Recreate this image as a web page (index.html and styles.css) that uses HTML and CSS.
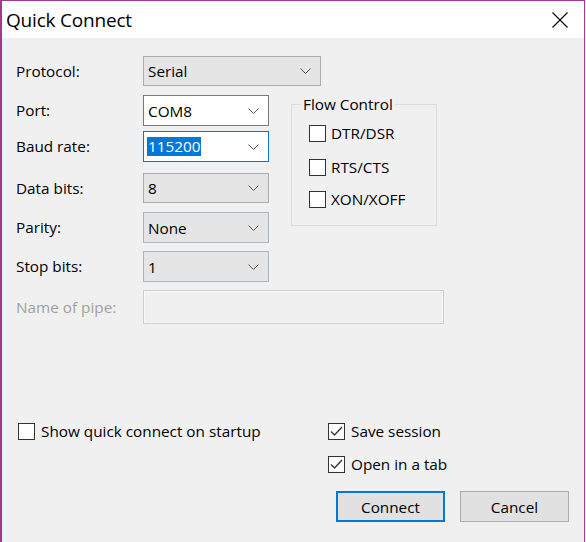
FILE: index.html
```html
<!DOCTYPE html>
<html>
<head>
<meta charset="utf-8">
<link rel="stylesheet" href="styles.css">
</head>
<body>
<div class="window">
  <div class="titlebar">
    <span class="title">Quick Connect</span>
    <svg class="close" width="16" height="16" viewBox="0 0 16 16"><path d="M0.5 0.5 L15.5 15.5 M15.5 0.5 L0.5 15.5" stroke="#000" stroke-width="1.1" fill="none"/></svg>
  </div>
  <div class="content">
    <div class="top">
      <div class="rows">
        <div class="row r-protocol">
          <span class="label">Protocol:</span>
          <div class="combo list wide"><span class="val">Serial</span><svg class="chev" width="11" height="6" viewBox="0 0 11 6"><path d="M0.5 0.5 L5.5 5.5 L10.5 0.5" stroke="#555" stroke-width="1" fill="none"/></svg></div>
        </div>
        <div class="row r-port">
          <span class="label">Port:</span>
          <div class="combo edit"><span class="val">COM8</span><svg class="chev" width="11" height="6" viewBox="0 0 11 6"><path d="M0.5 0.5 L5.5 5.5 L10.5 0.5" stroke="#555" stroke-width="1" fill="none"/></svg></div>
        </div>
        <div class="row r-baud">
          <span class="label">Baud rate:</span>
          <div class="combo edit focus"><span class="val sel">115200</span><svg class="chev" width="11" height="6" viewBox="0 0 11 6"><path d="M0.5 0.5 L5.5 5.5 L10.5 0.5" stroke="#555" stroke-width="1" fill="none"/></svg></div>
        </div>
        <div class="row r-data">
          <span class="label">Data bits:</span>
          <div class="combo list"><span class="val">8</span><svg class="chev" width="11" height="6" viewBox="0 0 11 6"><path d="M0.5 0.5 L5.5 5.5 L10.5 0.5" stroke="#555" stroke-width="1" fill="none"/></svg></div>
        </div>
        <div class="row r-parity">
          <span class="label">Parity:</span>
          <div class="combo list blu"><span class="val">None</span><svg class="chev" width="11" height="6" viewBox="0 0 11 6"><path d="M0.5 0.5 L5.5 5.5 L10.5 0.5" stroke="#555" stroke-width="1" fill="none"/></svg></div>
        </div>
        <div class="row r-stop">
          <span class="label">Stop bits:</span>
          <div class="combo list blu"><span class="val">1</span><svg class="chev" width="11" height="6" viewBox="0 0 11 6"><path d="M0.5 0.5 L5.5 5.5 L10.5 0.5" stroke="#555" stroke-width="1" fill="none"/></svg></div>
        </div>
      </div>
      <fieldset class="flow">
        <legend>Flow Control</legend>
        <label class="check fc fc1"><span class="box"></span><span>DTR/DSR</span></label>
        <label class="check fc fc2"><span class="box"></span><span>RTS/CTS</span></label>
        <label class="check fc fc3"><span class="box"></span><span>XON/XOFF</span></label>
      </fieldset>
      <div class="row r-pipe">
        <span class="label dim">Name of pipe:</span>
        <div class="pipe"></div>
      </div>
    </div>
    <div class="bottom">
      <label class="check startup"><span class="box"></span><span>Show quick connect on startup</span></label>
      <div class="right">
        <label class="check"><span class="box"><svg width="15" height="15" viewBox="0 0 15 15"><path d="M2 7.5 L5.5 11 L13 3" stroke="#333" stroke-width="1.3" fill="none"/></svg></span><span>Save session</span></label>
        <label class="check tab"><span class="box"><svg width="15" height="15" viewBox="0 0 15 15"><path d="M2 7.5 L5.5 11 L13 3" stroke="#333" stroke-width="1.3" fill="none"/></svg></span><span>Open in a tab</span></label>
        <div class="buttons">
          <button class="btn default">Connect</button>
          <button class="btn">Cancel</button>
        </div>
      </div>
    </div>
  </div>
</div>
</body>
</html>
```
FILE: styles.css
```css
html, body {
  margin: 0;
  padding: 0;
  background: #ffffff;
}
body {
  font-family: "Open Sans", "Noto Sans", sans-serif;
  font-size: 15.3px;
  line-height: 20px;
  color: #000;
}
.window {
  width: 582px;
  height: 541px;
  border-top: 1px solid #a2398e;
  border-left: 2px solid #a2398e;
  border-right: 1px solid #a2398e;
  background: #f0f0f0;
  display: flex;
  flex-direction: column;
}
.titlebar {
  height: 37px;
  background: #ffffff;
  display: flex;
  align-items: center;
  justify-content: space-between;
  padding: 0 16px 0 4px;
}
.title {
  font-size: 19px;
  letter-spacing: -0.2px;
}
.close {
  display: block;
  margin-top: 1px;
}
.content {
  flex: 1;
  padding: 18px 15px 0 14px;
  display: flex;
  flex-direction: column;
}
.top {
  display: grid;
  grid-template-columns: 275px 146px;
  grid-template-areas:
    "rows flow"
    "pipe pipe";
  align-items: start;
}
.rows {
  grid-area: rows;
  display: flex;
  flex-direction: column;
}
.row {
  display: flex;
  align-items: center;
}
.label {
  width: 127px;
  flex: none;
  margin-top: -1px;
}
.label.dim { color: #a0a0a0; }
.r-port { margin-top: 9px; }
.r-baud { margin-top: 5px; }
.r-data { margin-top: 11px; }
.r-parity { margin-top: 9px; }
.r-stop { margin-top: 8px; }
.r-pipe { grid-area: pipe; margin-top: 8px; }

.combo {
  box-sizing: border-box;
  width: 126px;
  height: 31px;
  flex: none;
  border: 1px solid #adadad;
  display: flex;
  align-items: center;
  justify-content: space-between;
  padding: 0 9px 0 4px;
}
.combo.list { background: #e5e5e5; height: 30px; }
.r-parity .combo, .r-stop .combo { height: 31px; }
.combo.wide { width: 178px; padding-right: 9px; }
.combo.blu { border-color: #a7b6c7; }
.combo.edit { background: #ffffff; border-color: #7a7a7a; }
.combo.focus { border-color: #0078d7; }
.val.sel {
  background: #0078d7;
  color: #ffffff;
  line-height: 19px;
  padding: 0 1px;
  margin-left: -1px;
}
.chev { display: block; }
.pipe {
  box-sizing: border-box;
  width: 301px;
  height: 34px;
  flex: none;
  border: 1px solid #cdcdcd;
  box-shadow: inset 0 0 0 1px #f9f9f9;
  background: #f0f0f0;
}

.flow {
  grid-area: flow;
  box-sizing: border-box;
  margin: 38px 0 0 0;
  height: 132px;
  border: 1px solid #dcdcdc;
  padding: 9px 0 0 17px;
  display: flex;
  flex-direction: column;
}
.flow legend {
  padding: 0 2px;
  margin-left: -8px;
}
.fc2 { margin-top: 14px; }
.fc3 { margin-top: 12px; }
.check {
  display: flex;
  align-items: center;
  gap: 5px;
}
.box {
  box-sizing: border-box;
  width: 17px;
  height: 17px;
  border: 1px solid #333333;
  background: #ffffff;
  flex: none;
  display: flex;
  align-items: center;
  justify-content: center;
}
.box svg { display: block; }

.bottom {
  margin-top: 97px;
  display: flex;
  justify-content: space-between;
  align-items: flex-start;
}
.startup { margin-left: 2px; gap: 6px; }
.right {
  width: 241px;
  display: flex;
  flex-direction: column;
}
.right .check { gap: 6px; }
.tab { margin-top: 13px; }
.buttons {
  margin-top: 17px;
  margin-left: 8px;
  display: flex;
  gap: 15px;
}
.btn {
  box-sizing: border-box;
  width: 109px;
  height: 31px;
  font-family: inherit;
  font-size: 15.3px;
  color: #000;
  background: #e1e1e1;
  border: 1px solid #adadad;
  padding: 0;
}
.btn.default {
  border: 2px solid #0078d7;
}
```
